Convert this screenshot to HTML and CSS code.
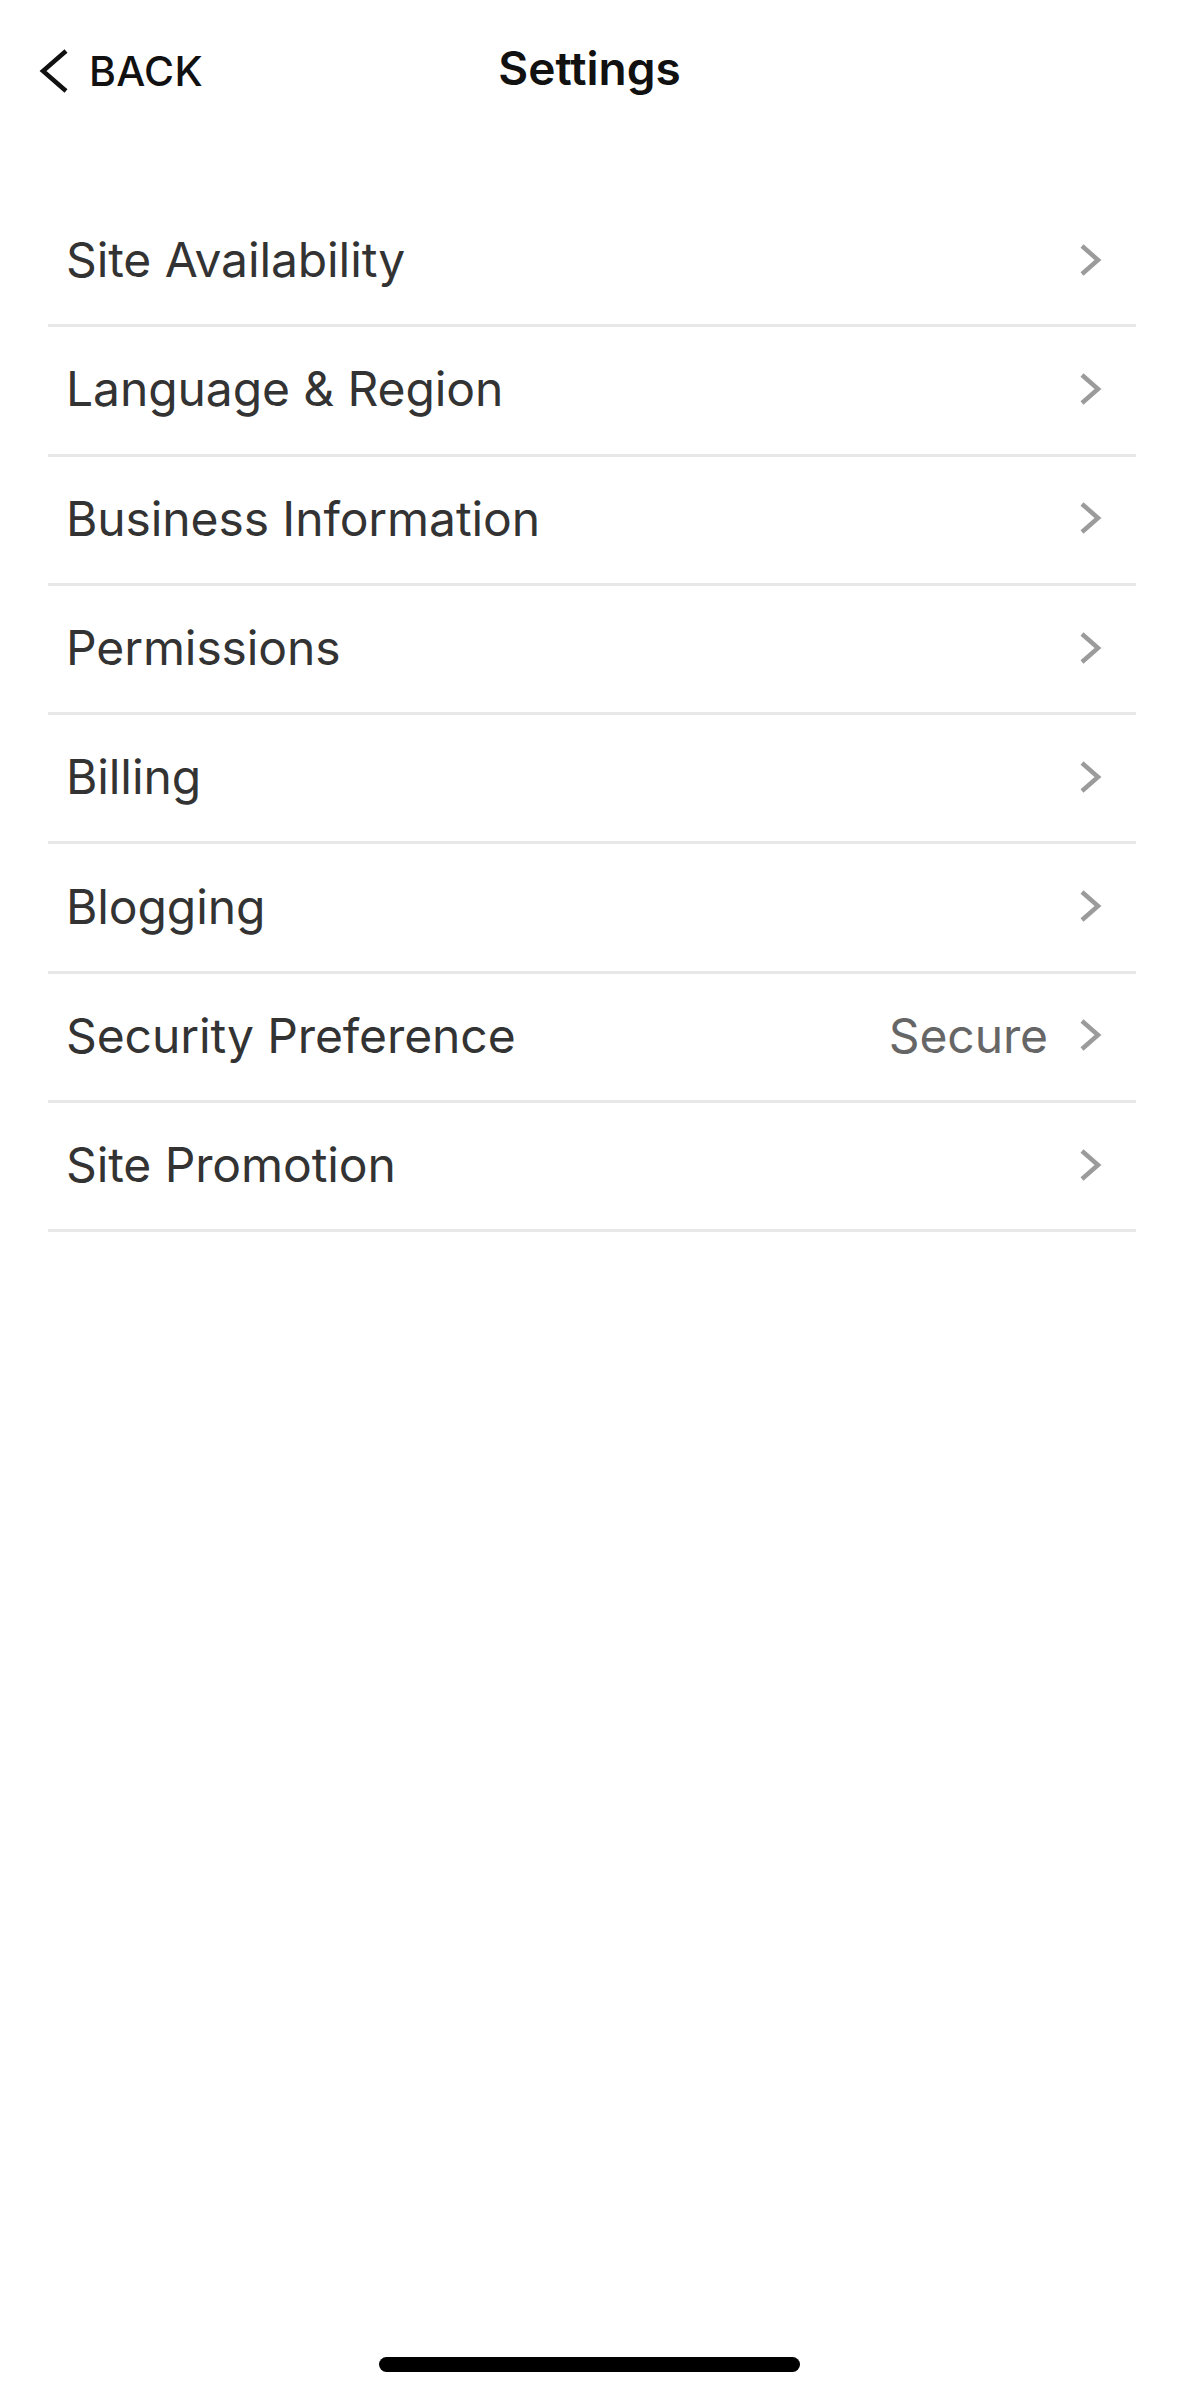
FILE: index.html
```html
<!DOCTYPE html>
<html lang="en">
<head>
<meta charset="utf-8">
<title>Settings</title>
<link rel="stylesheet" href="styles.css">
</head>
<body>
<div class="page">
  <header class="header">
    <a class="back" href="#">
      <svg class="back-icon" width="32" height="46" viewBox="0 0 32 46" aria-hidden="true">
        <path d="M29 3 L6 23 L29 43" fill="none" stroke="#111" stroke-width="4.5" stroke-linejoin="miter"/>
      </svg>
      <span class="back-label">BACK</span>
    </a>
    <h1 class="title">Settings</h1>
  </header>
  <ul class="list">
    <li class="row"><span class="label">Site Availability</span><span class="right"><svg class="chev" viewBox="0 0 24 32"><path d="M4 2 L20 16 L4 30" /></svg></span></li>
    <li class="row"><span class="label">Language &amp; Region</span><span class="right"><svg class="chev" viewBox="0 0 24 32"><path d="M4 2 L20 16 L4 30" /></svg></span></li>
    <li class="row"><span class="label">Business Information</span><span class="right"><svg class="chev" viewBox="0 0 24 32"><path d="M4 2 L20 16 L4 30" /></svg></span></li>
    <li class="row"><span class="label">Permissions</span><span class="right"><svg class="chev" viewBox="0 0 24 32"><path d="M4 2 L20 16 L4 30" /></svg></span></li>
    <li class="row"><span class="label">Billing</span><span class="right"><svg class="chev" viewBox="0 0 24 32"><path d="M4 2 L20 16 L4 30" /></svg></span></li>
    <li class="row"><span class="label">Blogging</span><span class="right"><svg class="chev" viewBox="0 0 24 32"><path d="M4 2 L20 16 L4 30" /></svg></span></li>
    <li class="row"><span class="label">Security Preference</span><span class="right"><span class="value">Secure</span><svg class="chev" viewBox="0 0 24 32"><path d="M4 2 L20 16 L4 30" /></svg></span></li>
    <li class="row"><span class="label">Site Promotion</span><span class="right"><svg class="chev" viewBox="0 0 24 32"><path d="M4 2 L20 16 L4 30" /></svg></span></li>
  </ul>
  <div class="home-indicator"></div>
</div>
</body>
</html>
```
FILE: styles.css
```css
* { box-sizing: border-box; }
html, body { margin: 0; padding: 0; background: #fff; }
body {
  font-family: Inter, "Liberation Sans", Arial, sans-serif;
  color: #333;
}
.page {
  width: 1179px;
  height: 2396px;
  display: flex;
  flex-direction: column;
}
.header {
  position: relative;
  height: 138px;
  display: flex;
  align-items: center;
  justify-content: center;
}
.back {
  position: absolute;
  left: 37px;
  top: 46px;
  display: flex;
  align-items: center;
  gap: 20px;
  color: #111;
  text-decoration: none;
}
.back-icon { display: block; }
.back-label {
  font-size: 41px;
  font-weight: 500;
  letter-spacing: 0.3px;
}
.title {
  margin: 0;
  font-size: 46px;
  font-weight: 600;
  color: #111;
  margin-top: -2px;
}
.list {
  list-style: none;
  margin: 60px 43px 0 48px;
  padding: 0;
}
.row {
  height: 129.3px;
  border-bottom: 3px solid #e8e8e8;
  display: flex;
  align-items: center;
  justify-content: space-between;
  padding: 0 34px 3px 18px;
}
.label {
  font-size: 48px;
  font-weight: 400;
  color: #333;
  letter-spacing: -0.1px;
}
.right {
  display: flex;
  align-items: center;
  gap: 30px;
}
.value {
  font-size: 48px;
  color: #666;
  letter-spacing: -0.1px;
}
.chev {
  width: 24px;
  height: 32px;
  display: block;
}
.chev path {
  fill: none;
  stroke: #9b9b9b;
  stroke-width: 4.5;
}
.home-indicator {
  margin: auto auto 24px;
  width: 421px;
  height: 15px;
  border-radius: 8px;
  background: #000;
}
```
